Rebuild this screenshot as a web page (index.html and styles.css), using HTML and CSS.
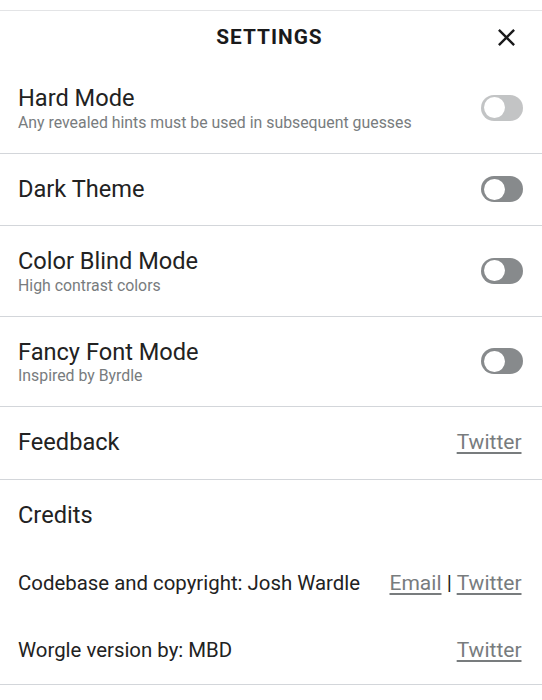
FILE: index.html
```html
<!DOCTYPE html>
<html lang="en">
<head>
<meta charset="utf-8">
<title>Settings</title>
<link rel="stylesheet" href="styles.css">
</head>
<body>
<div class="topbar"></div>
<header class="head">
  <span></span>
  <h1 class="head-title">Settings</h1>
  <button class="close" aria-label="Close">
    <svg viewBox="0 0 24 24" width="29" height="29"><path fill="#1a1a1b" d="M19 6.41L17.59 5 12 10.59 6.41 5 5 6.41 10.59 12 5 17.59 6.41 19 12 13.41 17.59 19 19 17.59 13.41 12z"/></svg>
  </button>
</header>
<section class="setting">
  <div class="text">
    <div class="title">Hard Mode</div>
    <div class="desc">Any revealed hints must be used in subsequent guesses</div>
  </div>
  <div class="switch disabled"><span class="knob"></span></div>
</section>
<section class="setting">
  <div class="text">
    <div class="title">Dark Theme</div>
  </div>
  <div class="switch"><span class="knob"></span></div>
</section>
<section class="setting">
  <div class="text">
    <div class="title">Color Blind Mode</div>
    <div class="desc">High contrast colors</div>
  </div>
  <div class="switch"><span class="knob"></span></div>
</section>
<section class="setting">
  <div class="text">
    <div class="title">Fancy Font Mode</div>
    <div class="desc">Inspired by Byrdle</div>
  </div>
  <div class="switch"><span class="knob"></span></div>
</section>
<section class="setting">
  <div class="text">
    <div class="title">Feedback</div>
  </div>
  <div class="links"><a href="#">Twitter</a></div>
</section>
<section class="credits">
  <div class="title">Credits</div>
  <div class="credit-list">
    <div class="credit">
      <span>Codebase and copyright: Josh Wardle</span>
      <span class="links"><a href="#">Email</a> <span class="sep">|</span> <a href="#">Twitter</a></span>
    </div>
    <div class="credit">
      <span>Worgle version by: MBD</span>
      <span class="links"><a href="#">Twitter</a></span>
    </div>
  </div>
</section>
</body>
</html>
```

FILE: styles.css
```css
html, body {
  margin: 0;
  padding: 0;
  background: #ffffff;
}
body {
  font-family: Roboto, "Liberation Sans", Arial, sans-serif;
  color: #1a1a1b;
}
.topbar {
  height: 10px;
  border-bottom: 1px solid #e3e4e6;
}
.head {
  height: 52px;
  display: grid;
  grid-template-columns: 1fr auto 1fr;
  align-items: center;
  padding: 0 21px 0 18px;
}
.head-title {
  margin: 0;
  font-size: 20.8px;
  font-weight: 700;
  letter-spacing: 1px;
  text-transform: uppercase;
  color: #1a1a1b;
  line-height: 30px;
}
.close {
  justify-self: end;
  border: 0;
  background: none;
  padding: 0;
  margin: 0;
  width: 29px;
  height: 29px;
  display: flex;
  cursor: pointer;
}
.setting {
  display: flex;
  justify-content: space-between;
  align-items: center;
  padding: 21px 19px 21px 18px;
  border-bottom: 1px solid #d3d6da;
}
.title {
  font-size: 23.6px;
  line-height: 29.5px;
  color: #222222;
}
.desc {
  font-size: 15.85px;
  line-height: 18px;
  color: #787c7e;
}
.switch {
  width: 42px;
  height: 26px;
  border-radius: 13px;
  background: #878a8c;
  display: flex;
  align-items: center;
  padding: 0 3px;
  box-sizing: border-box;
  flex-shrink: 0;
}
.switch.disabled {
  opacity: 0.5;
}
.knob {
  width: 20.8px;
  height: 20.8px;
  border-radius: 50%;
  background: #ffffff;
}
.links {
  font-size: 21px;
  line-height: 25px;
  color: #1a1a1b;
  margin-right: 1.5px;
}
.links a {
  color: #787c7e;
  text-decoration: underline;
  text-underline-offset: 3px;
}
.credits {
  padding: 21px 19px 0 18px;
  border-bottom: 1px solid #d3d6da;
}
.credit-list {
  margin-top: 19.5px;
}
.credit {
  display: flex;
  justify-content: space-between;
  align-items: center;
  padding: 21px 0;
  font-size: 20.4px;
  line-height: 25px;
  color: #222222;
}
.sep {
  color: #1a1a1b;
}
```
